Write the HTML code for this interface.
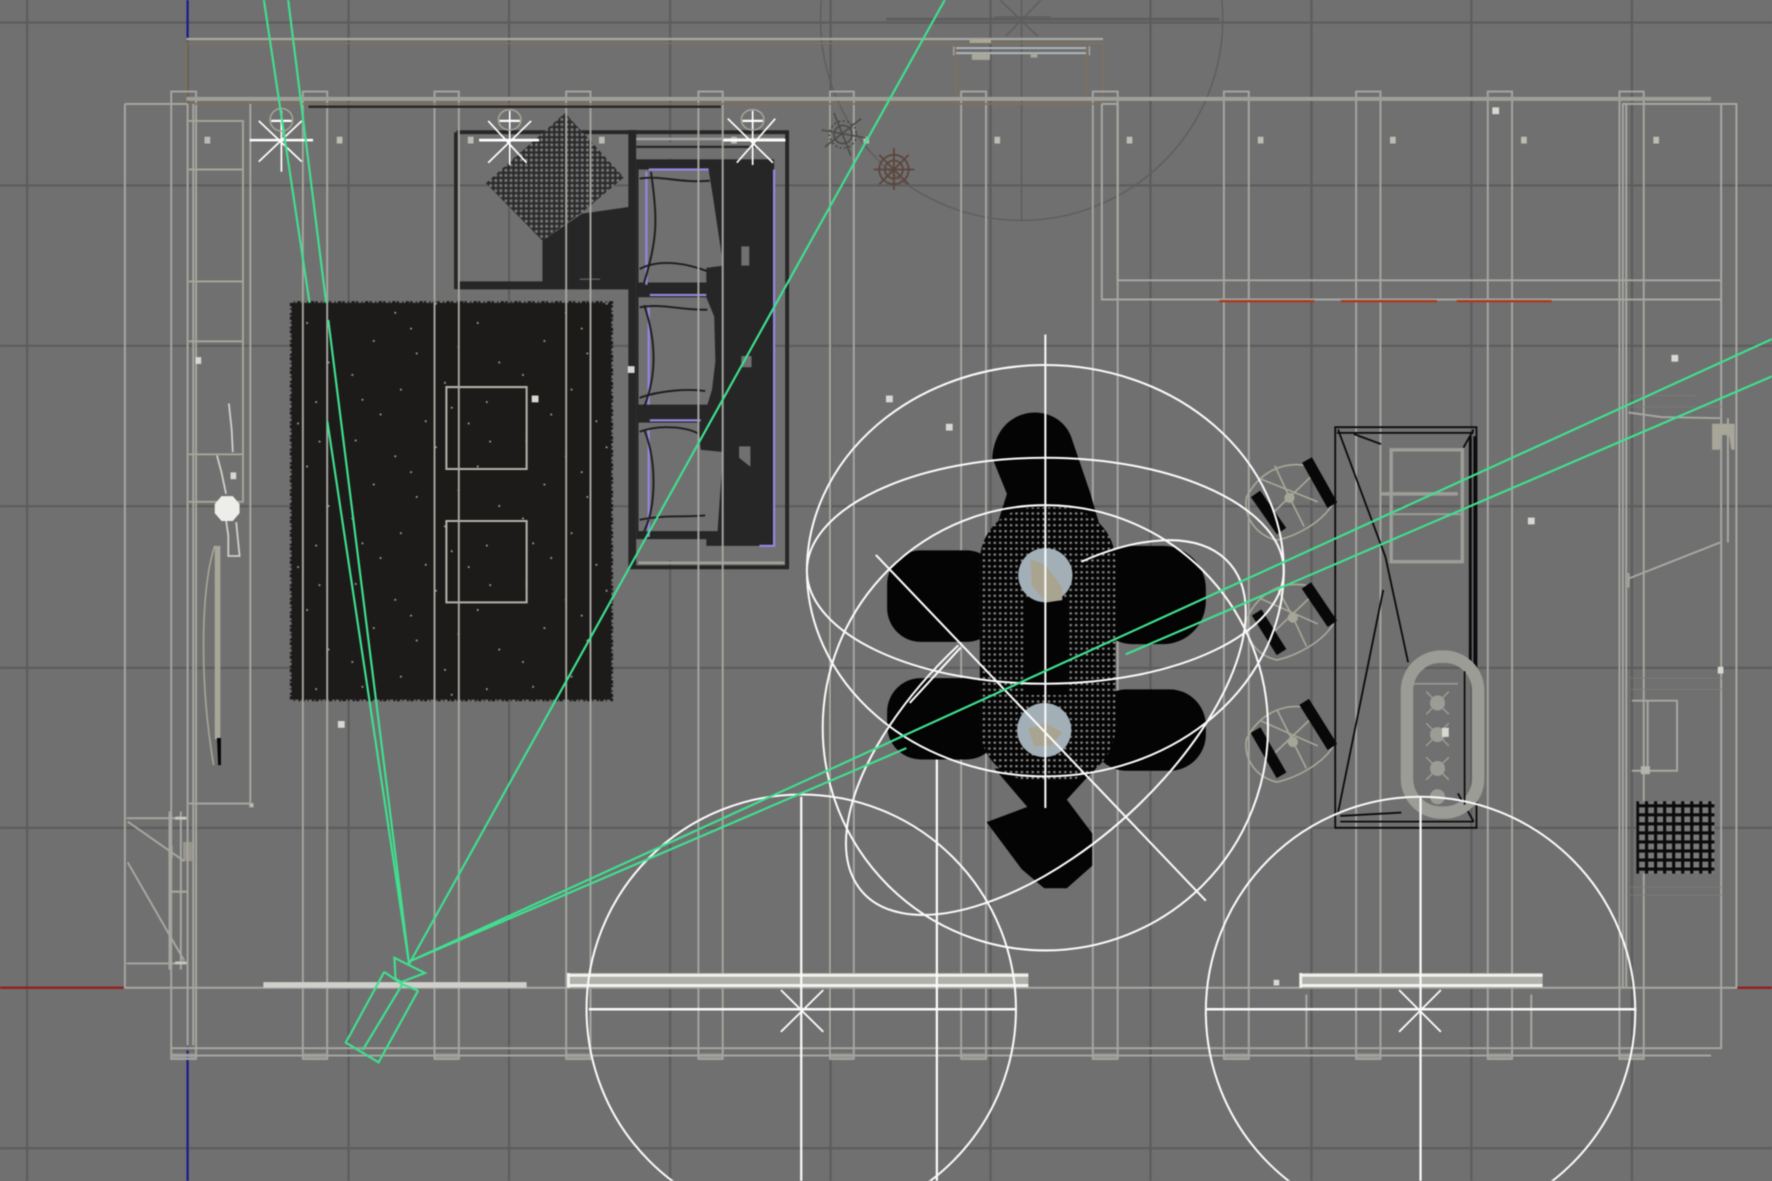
<!DOCTYPE html>
<html><head><meta charset="utf-8"><title>Viewport</title>
<style>
html,body{margin:0;padding:0;background:#707070;width:1772px;height:1181px;overflow:hidden}
svg{display:block;filter:blur(.45px)}
</style></head><body>
<svg xmlns="http://www.w3.org/2000/svg" width="1772" height="1181" viewBox="0 0 1568 1045" preserveAspectRatio="none" fill="none">
<defs>
<pattern id="speck" width="151" height="127" patternUnits="userSpaceOnUse">
<g fill="#a8a79f"><rect x="12" y="8" width="1.500" height="1.500"/><rect x="47" y="22" width="1.500" height="1.500"/><rect x="83" y="14" width="1.500" height="1.500"/><rect x="120" y="31" width="1.500" height="1.500"/><rect x="28" y="47" width="1.500" height="1.500"/><rect x="66" y="58" width="1.500" height="1.500"/><rect x="103" y="52" width="1.500" height="1.500"/><rect x="139" y="66" width="1.500" height="1.500"/><rect x="9" y="77" width="1.500" height="1.500"/><rect x="52" y="90" width="1.500" height="1.500"/><rect x="91" y="84" width="1.500" height="1.500"/><rect x="128" y="101" width="1.500" height="1.500"/><rect x="34" y="112" width="1.500" height="1.500"/><rect x="74" y="118" width="1.500" height="1.500"/><rect x="112" y="120" width="1.500" height="1.500"/><rect x="61" y="36" width="1.500" height="1.500"/><rect x="131" y="9" width="1.500" height="1.500"/><rect x="18" y="99" width="1.500" height="1.500"/><rect x="97" y="106" width="1.500" height="1.500"/></g>
</pattern>
<pattern id="pillow" width="4.500" height="4.500" patternUnits="userSpaceOnUse"><rect width="4.500" height="4.500" fill="#2c2c2c"/><circle cx="2.200" cy="2.200" r="1.350" fill="#767676"/></pattern>
<pattern id="table" width="4.800" height="5.200" patternUnits="userSpaceOnUse"><rect width="4.800" height="5.200" fill="#050505"/><rect x=".8" y="1" width="2.100" height="1.900" fill="#8a8a8a"/></pattern>
<pattern id="mesh" width="8" height="8" patternUnits="userSpaceOnUse"><rect width="8" height="8" fill="#0b0b0b"/><rect x="2.400" y="2.400" width="5.200" height="5.200" fill="#7a7a7a"/></pattern>
</defs>
<rect width="1568" height="1045" fill="#707070"/>

<!-- grid -->
<path stroke="#5d5d5d" stroke-width="2" d="M24 0V1045M308.500 0V1045M450.500 0V1045M593 0V1045M735 0V1045M876.500 0V1045M1018 0V1045M1160.500 0V1045M1302 0V1045M1444 0V1045M0 20H1568M0 164H1568M0 306H1568M0 448H1568M0 591H1568M0 732.500H1568M0 1016H1568"/>
<path stroke="#5d5d5d" stroke-width="2.400" d="M784 17H1079"/>
<!-- axes -->
<path stroke="#5d5d5d" stroke-width="2" d="M0 874H1568M166 34V930"/>
<path stroke="#1c1c90" stroke-width="2" d="M166 0V34M166 930V1045"/>
<path stroke="#962222" stroke-width="2.200" d="M0 874H110M1537 874H1568"/>

<!-- top large gray circle -->
<circle cx="904" cy="17" r="178" stroke="#5e5e5e" stroke-width="1.300"/>
<path stroke="#5e5e5e" stroke-width="1.300" d="M904 0V195M885 0L918 32M921 0L890 32M880 15H930"/>

<!-- top brown/gray frame -->
<path stroke="#a8a8a2" stroke-width="2" d="M165 34.500H976"/>
<path stroke="#80705a" stroke-width="1.400" d="M165 38.500H976.500V92M165 38V92M846.500 40V92H961.500V40"/>
<path stroke="#aeb6ba" stroke-width="1.700" d="M846 42.500H961M846 47H961"/>
<path stroke="#a0a098" stroke-width="1.500" d="M844 41V49M964 41V49"/>
<rect x="858" y="34" width="19" height="4" fill="#a8a89a"/>
<rect x="860" y="47" width="16" height="6" fill="#a8a89a"/>
<rect x="912" y="47" width="6" height="4" fill="#a8a89a"/>

<!-- rug -->
<rect x="258" y="268" width="283" height="351" fill="#1c1b19"/>
<path stroke="#1c1b19" stroke-width="3" stroke-dasharray="3 2 1 3 2 1" d="M258 268V619H541V268Z"/>
<rect x="258" y="268" width="283" height="351" fill="url(#speck)"/>
<path stroke="#b4b2aa" stroke-width="1.800" d="M395 342.500H466V415H395ZM395 461H466V533H395Z"/>

<!-- upper-left sofa box -->
<path stroke="#262626" stroke-width="3.400" d="M404 117H696.500V502H559V254H403.500V117"/>
<path fill="#262626" d="M480 213L515 189L557 183V250H480Z"/>
<path fill="#262626" d="M403 249H557V256H403Z"/>
<path fill="#262626" d="M556 115H563V503H556Z"/>
<path fill="url(#pillow)" d="M500 100L552 157L515 188L480 213L430 162Z"/>
<path stroke="#5e5e5e" stroke-width="1.200" d="M513 247H531"/>
<!-- sofa body -->
<rect x="563" y="141" width="122" height="342" fill="#262626"/>
<path fill="#707070" d="M565 150H627L631 175L640 235L625 237V250H565Z"/>
<path fill="#707070" d="M565 263H625L632 280L633 320L630 345L626 358H565Z"/>
<path fill="#707070" d="M565 374H618L620 398L640 400L637 440L635 470H565Z"/>
<path fill="#707070" d="M563 477H625V484L645 486L663 494L672 483H685V496H563Z"/>
<path fill="#707070" d="M563 126H630V140H563Z"/>
<path fill="#707070" d="M656 218H663V235H656ZM656 315H665V325H656ZM654 395H664V413L654 405Z"/>
<path stroke="#a4a39d" stroke-width="2.200" d="M563 123H694M565 498H694"/>
<path stroke="#262626" stroke-width="2" d="M563 130H668"/>
<path stroke="#9486df" stroke-width="2" d="M572 152V252M574 150H627M685 150V483H672M575 261H625M574 270V358M575 372H620M574 380V475"/>
<path stroke="#1e1e1e" stroke-width="1.700" d="M566 238C585 228 610 234 626 240M566 272C585 268 605 275 626 274M576 152C582 195 582 210 570 250M570 270C582 305 580 335 570 360M566 352C585 345 610 344 624 346M566 382C585 375 610 378 620 385M570 380C582 410 580 450 570 470M566 460C590 455 610 458 624 456M566 158C585 155 600 162 628 160"/>

<!-- walls : vertical pairs -->
<g stroke="#a6a6a0" stroke-width="1.700">
<rect x="151.500" y="81" width="22" height="856"/><rect x="268" y="81" width="21.500" height="856"/><rect x="384.500" y="81" width="21.500" height="856"/><rect x="501" y="81" width="21.500" height="856"/><rect x="618" y="81" width="21.500" height="856"/><rect x="734.500" y="81" width="21" height="856"/><rect x="850.500" y="81" width="22" height="856"/><rect x="967" y="81" width="22" height="856"/><rect x="1083" y="81" width="22" height="856"/><rect x="1200" y="81" width="21.500" height="856"/><rect x="1316.500" y="81" width="21.500" height="856"/><rect x="1433" y="81" width="21.500" height="856"/>
</g>
<path stroke="#a09e98" stroke-width="3.600" d="M165 87.500H1514"/>
<path stroke="#80705a" stroke-width="1.400" d="M165 92H975"/>
<path stroke="#2a2a2a" stroke-width="2.200" d="M273 94.500H638"/>
<g stroke="#a8a8a2" stroke-width="1.700">
<path d="M110.500 92H166M110.500 92V874H1536.500V92H1436V874M1523 92V927.500H151M151 934H1514M975 92V265H1523M989 92V248H1523M989 92H975M166 92V925M171 92V925M1439 92V874"/>
<path d="M167 107H215V444H167M167 150H215M167 249H215M167 302H215M167 402H215" stroke="#a8a698"/>
<path d="M221.500 92V711H167"/>
<path d="M112 724H165M112 852.500H165M113 727L163 762M113 763L163 850M150 718V858M160 718V858"/>
<path d="M522.500 874V930M1156 880V927M1355 880V927"/>
<path d="M1441 365L1470 369L1522 370M1441 507V520M1441 512L1522 480M1529 370V480M1444 620H1484V682H1444M1458 620V682"/>
</g>
<rect x="221" y="711" width="3" height="3" fill="#c8c8c0" stroke="#a8a8a2" stroke-width="1"/>
<rect x="151" y="932" width="22" height="5" fill="#a4a49e" opacity=".6"/>
<rect x="268" y="932" width="21" height="5" fill="#a4a49e" opacity=".6"/><rect x="385" y="932" width="21" height="5" fill="#a4a49e" opacity=".6"/><rect x="501" y="932" width="21" height="5" fill="#a4a49e" opacity=".6"/><rect x="618" y="932" width="21" height="5" fill="#a4a49e" opacity=".6"/><rect x="735" y="932" width="21" height="5" fill="#a4a49e" opacity=".6"/><rect x="851" y="932" width="21" height="5" fill="#a4a49e" opacity=".6"/><rect x="967" y="932" width="21" height="5" fill="#a4a49e" opacity=".6"/><rect x="1083" y="932" width="21" height="5" fill="#a4a49e" opacity=".6"/><rect x="1200" y="932" width="21" height="5" fill="#a4a49e" opacity=".6"/><rect x="1317" y="932" width="21" height="5" fill="#a4a49e" opacity=".6"/><rect x="1433" y="932" width="21" height="5" fill="#a4a49e" opacity=".6"/>

<!-- red dashes -->
<path stroke="#a83c22" stroke-width="2.200" d="M1079 266.500H1163M1186.500 266.500H1271.500M1289 266.500H1373"/>

<!-- vertex squares -->
<g fill="#bdbcb4">
<rect x="181" y="121" width="5" height="6"/><rect x="298" y="121" width="5" height="6"/><rect x="414" y="121" width="5" height="6"/><rect x="530" y="121" width="5" height="6"/><rect x="647" y="121" width="5" height="6"/><rect x="764" y="121" width="5" height="6"/><rect x="880" y="121" width="5" height="6"/><rect x="997" y="121" width="5" height="6"/><rect x="1113" y="121" width="5" height="6"/><rect x="1230" y="121" width="5" height="6"/><rect x="1346" y="121" width="5" height="6"/><rect x="1463" y="121" width="5" height="6"/>
</g>
<g fill="#d8d8d2">
<rect x="1320.500" y="95" width="6" height="6"/><rect x="173" y="316" width="5" height="6"/><rect x="555.500" y="324" width="6" height="6"/><rect x="470.500" y="350" width="6" height="6"/><rect x="784" y="350" width="6" height="6"/><rect x="837" y="375" width="6" height="6"/><rect x="204" y="418" width="5" height="6"/><rect x="1479" y="314" width="6" height="6"/><rect x="1352" y="458" width="6" height="6"/><rect x="299" y="638" width="6" height="6"/><rect x="1520" y="590" width="5" height="6"/><rect x="1127" y="867" width="5" height="5"/>
</g>

<!-- left items : lamp, TV -->
<path stroke="#d0d0ca" stroke-width="1.600" d="M202.500 357L205 380L206 400M192 403L196 418L200 437M200 460L202 474V492H212L209 462"/>
<path fill="#ededea" d="M196 439H206L212 446V454L206 461H196L190 454V446Z"/>
<path stroke="#a8a698" stroke-width="1.400" d="M190 483C178 520 176 600 189 677"/>
<path fill="#a8a698" d="M190 483L195 483V654H190Z"/>
<path fill="#050505" d="M192 653H195.500V677H193Z"/>
<path fill="#a8a698" d="M149 750L153 748L153 760L149 758ZM162 745H170V762H162Z" opacity=".7"/>
<path stroke="#c8c8c0" stroke-width="2.500" d="M155 724H165M155 852H165"/>
<path stroke="#a8a698" stroke-width="2" d="M152 789H165"/>

<!-- top stars -->
<g stroke="#fff">
<path d="M221 124H277M249 98V152M229 107L267 143M267 107L229 143" stroke-width="1.500"/><path d="M221 124H277" stroke-width="2.200"/>
<path d="M424 124H477M451 98V146M432 107L466 144M470 107L432 144" stroke-width="1.500"/><path d="M424 124H477" stroke-width="2.400"/>
<path d="M640 124H695M666 98V146M644 105L684 144M686 105L652 144" stroke-width="1.500"/><path d="M640 124H695" stroke-width="2.400"/>
<path d="M240 107H258M442 107H460M657 107H675" stroke-width="2"/>
</g>
<g stroke="#a8a698" stroke-width="1.300">
<ellipse cx="249" cy="106" rx="10" ry="10"/><ellipse cx="451" cy="106" rx="10" ry="9"/><ellipse cx="666" cy="106" rx="10" ry="9"/>
</g>

<!-- spider-like dark items -->
<g stroke="#4b4b48" stroke-width="1.400"><circle cx="746" cy="119" r="8"/><circle cx="746" cy="119" r="12" stroke-dasharray="2 2"/><path d="M727 115L766 122M738 100L753 138M730 130L762 105"/></g>
<g stroke="#5c463c" stroke-width="1.600"><circle cx="791" cy="150" r="8"/><circle cx="791" cy="150" r="13"/><path d="M773 150H809M791 131V168M778 137L804 163M804 137L778 163"/></g>

<!-- table and chairs -->
<g fill="#040404">
<path d="M915 365C895 366 880 380 878 405L891 437L880 472H975L965 437L949 390C945 375 932 365 915 365Z"/>
<rect x="785" y="487" width="100" height="81" rx="30"/>
<rect x="965" y="483" width="102" height="87" rx="38"/>
<rect x="785" y="600" width="100" height="72" rx="30"/>
<rect x="965" y="610" width="102" height="72" rx="32"/>
<path d="M880 680L909 714L873 727.500L904 769L924 786H944L966.500 766V737.500L944 707.500L961 689L970 680Z"/>
</g>
<rect x="867" y="449" width="120" height="242" rx="48" fill="url(#table)"/>
<rect x="906" y="530" width="38" height="85" fill="#040404"/>
<circle cx="925" cy="509" r="24" fill="#a3afb6"/><path fill="#a8a490" d="M912 495L925 500L940 520V531L926 533L913 518Z"/>
<circle cx="924" cy="646" r="24" fill="#a3afb6"/><path fill="#a8a490" d="M910 645L925 640L940 648L930 660L915 660Z"/>

<!-- armchairs -->
<g stroke="#a6a698" stroke-width="1.500">
<path d="M1156 412C1135 408 1114 418 1103 440C1100 458 1112 474 1130 478C1148 474 1170 462 1180 445M1116 424L1166 444M1122 458L1162 420M1141 440L1128 412M1141 440L1154 466"/>
<path d="M1156 518C1135 514 1114 524 1104 546C1100 564 1112 580 1130 584C1148 580 1170 568 1180 552M1116 530L1166 552M1122 564L1162 526M1144 546L1130 520M1144 546L1156 572"/>
<path d="M1156 626C1135 622 1114 632 1103 654C1100 672 1112 688 1130 692C1148 688 1170 676 1180 660M1116 638L1166 660M1122 672L1162 634M1144 656L1130 628M1144 656L1156 680"/>
</g>
<path fill="#a6a698" d="M1141 436a4.500 4.500 0 1 0 .01 0ZM1144 542a4.500 4.500 0 1 0 .01 0ZM1144 652a4.500 4.500 0 1 0 .01 0Z"/>
<g stroke="#080808" stroke-width="10">
<path d="M1156.500 407L1179 447M1111 437L1134 470M1156 518L1179 552M1112 542L1134 577M1154 621L1179 661M1111 646L1134 686"/>
</g>

<!-- black cabinet on right -->
<path stroke="#0b0b0b" stroke-width="1.600" d="M1181.500 378H1306.500V732.500H1181.500ZM1183 383H1304M1184 380L1226 493L1246 586M1224 522L1184 719M1304 380L1295 396M1198 384L1222 393M1186 722L1240 719M1186 727H1304M1290 702L1304 727"/>
<path stroke="#0b0b0b" stroke-width="2.500" d="M1301 386V590M1305 386V590"/>
<path stroke="#9e9e98" stroke-width="3" d="M1231 398H1294V497H1231ZM1222 437H1290"/>
<path stroke="#9e9e98" stroke-width="1.600" d="M1231 455H1294"/>
<rect x="1245" y="581" width="63" height="138" rx="30" stroke="#9c9c96" stroke-width="11"/>
<path stroke="#0b0b0b" stroke-width="1.500" d="M1296 594V712"/>
<g stroke="#9c9c96" stroke-width="1.300"><circle cx="1272" cy="622" r="6" fill="#9c9c96"/><circle cx="1272" cy="650" r="6" fill="#9c9c96"/><circle cx="1272" cy="680" r="6" fill="#9c9c96"/><circle cx="1272" cy="705" r="6" fill="#9c9c96"/><path d="M1262 612L1282 632M1282 612L1262 632M1262 640L1282 660M1282 640L1262 660M1262 670L1282 690M1282 670L1262 690M1250 605H1290"/></g>
<rect x="1276" y="644" width="6" height="8" fill="#d8d8d2"/>

<!-- right mesh -->
<rect x="1448" y="709" width="69" height="64" fill="url(#mesh)"/>
<path stroke="#7e7e78" stroke-width="1" opacity=".6" d="M1442 600H1525M1442 610H1525M1442 785H1525M1442 792H1525M1442 360H1525M1442 350H1500"/>
<path fill="#a8a698" d="M1515 375H1535V398H1532L1530 385H1523L1522 398H1515Z"/>
<rect x="1452" y="678" width="8" height="7" fill="#b4b4ac"/>

<!-- bottom windows -->
<rect x="233" y="869" width="233" height="5" fill="#cfcfcb"/>
<rect x="503" y="861" width="407" height="12.500" fill="#b0b0aa"/>
<path stroke="#f2f2ee" stroke-width="2.600" d="M503 863H910M503 872H910M503 861V874"/>
<rect x="1151" y="861" width="214" height="12.500" fill="#b0b0aa"/>
<path stroke="#f2f2ee" stroke-width="2.600" d="M1151 863H1365M1151 872H1365M1151 861V874"/>

<!-- white gizmos -->
<g stroke="#fafafa" stroke-width="1.800">
<ellipse cx="925" cy="505" rx="211" ry="182"/>
<ellipse cx="925" cy="505" rx="211" ry="100"/>
<circle cx="925" cy="644" r="197"/>
<path d="M957 497A218 106 -42 1 1 848 571"/>
<path d="M925 296V715M775 491L1067 797M805 622L850 573"/>
<circle cx="709" cy="893" r="190"/>
<circle cx="1257" cy="895" r="190"/>
<path d="M709 705V1045M829 672V1045M1257 705V1045" stroke-width="2"/>
<path d="M521 893H899M1067 893H1448" stroke-width="2.200"/>
<path d="M691 876L728.500 913M728.500 876L691 913M1238 876L1275 913M1275 876L1238 913" stroke-width="1.600"/>
</g>

<!-- green camera -->
<g stroke="#3fe08f" stroke-width="1.900">
<path d="M233.500 0L273.900 268M289.700 373L362 853M255 0L288.600 268M290.500 283L362 853M362 853L836 0M364 850L1568 300M364 850L802 662M996 579L1568 333"/>
<path d="M340 860L306 922.500L335 940L370 876.500M356 871L321 929M340 860L356 871L370 876.500M349 847.500L376 861L355 869L350 866Z"/>
</g>
</svg>
</body></html>
